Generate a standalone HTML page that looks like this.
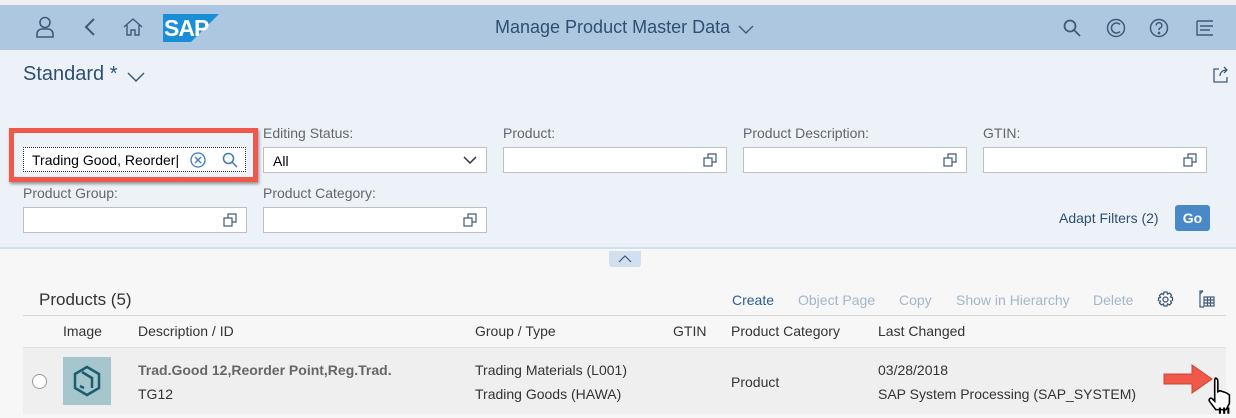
<!DOCTYPE html>
<html><head><meta charset="utf-8"><style>
*{box-sizing:border-box;margin:0;padding:0}
body{width:1236px;height:418px;overflow:hidden;background:#f7f7f7;font-family:"Liberation Sans",Arial,sans-serif;position:relative}
.a{position:absolute}
.top{left:0;top:0;width:1236px;height:5px;background:#efefef}
.hdr{left:0;top:5px;width:1236px;height:45px;background:#aec7e1}
.fb{left:0;top:50px;width:1236px;height:199px;background:#edf2f9;border-bottom:2px solid #d1dff0}
.lbl{font-size:14px;color:#666}
.inp{height:26px;background:#fff;border:1px solid #bfbfbf}
.vh{position:absolute;right:8px;top:5px}
.tb{font-size:14px;color:#a3b6cc}
.th{font-size:14px;color:#333}
</style></head><body>
<div class="a top"></div>
<div class="a hdr">
 <svg class="a" style="left:35px;top:11px" width="20" height="22" viewBox="0 0 20 22" fill="none" stroke="#3e5a78" stroke-width="1.6"><circle cx="10" cy="6.5" r="5"/><path d="M2 21v-3a5 5 0 0 1 5-5h6a5 5 0 0 1 5 5v3z"/></svg>
 <svg class="a" style="left:84px;top:12px" width="12" height="20" viewBox="0 0 12 20" fill="none" stroke="#3e5a78" stroke-width="2"><path d="M10 2L2 10l8 8"/></svg>
 <svg class="a" style="left:123px;top:13px" width="20" height="18" viewBox="0 0 20 18" fill="none" stroke="#3e5a78" stroke-width="1.4"><path d="M1 9L10 1l9 8M4 7v10h4v-5h4v5h4V7"/></svg>
 <svg class="a" style="left:163px;top:9px" width="56" height="28" viewBox="0 0 56 28"><path d="M0 0h56L28 28H0z" fill="#1a8fd8"/><text x="1" y="22" font-family="Liberation Sans" font-weight="bold" font-size="23" fill="#fff" letter-spacing="-1">SAP</text></svg>
 <div class="a" style="left:495px;top:12px;font-size:18px;color:#2e4e72">Manage Product Master Data</div>
 <svg class="a" style="left:738px;top:20px" width="16" height="10" viewBox="0 0 16 10" fill="none" stroke="#3e5a78" stroke-width="1.4"><path d="M1 1l7 7 7-7"/></svg>
 <svg class="a" style="left:1063px;top:14px" width="18" height="18" viewBox="0 0 18 18" fill="none" stroke="#3e5a78" stroke-width="1.8"><circle cx="7" cy="7" r="5.5"/><path d="M11 11l6 6"/></svg>
 <svg class="a" style="left:1106px;top:13px" width="20" height="20" viewBox="0 0 20 20" fill="none" stroke="#3e5a78" stroke-width="1.5"><circle cx="10" cy="10" r="8.5"/><path d="M14 6.5a5 5 0 1 0 0 7"/></svg>
 <svg class="a" style="left:1149px;top:13px" width="20" height="20" viewBox="0 0 20 20" fill="none" stroke="#3e5a78" stroke-width="1.5"><circle cx="10" cy="10" r="8.5"/><path d="M7.2 7.5a2.8 2.8 0 1 1 3.8 2.6c-.8.4-1 1-1 2"/><circle cx="10" cy="15" r=".6" fill="#3e5a78"/></svg>
 <svg class="a" style="left:1194px;top:15px" width="20" height="16" viewBox="0 0 20 16" fill="none" stroke="#3e5a78" stroke-width="1.4"><path d="M3 1h16M3 1v14h16M6 6h13M6 10h10"/></svg>
</div>
<div class="a fb">
 <div class="a" style="left:23px;top:13px;font-size:20px;color:#2e4e72">Standard *</div>
 <svg class="a" style="left:127px;top:22px" width="18" height="11" viewBox="0 0 18 11" fill="none" stroke="#3e5a78" stroke-width="1.5"><path d="M1 1l8 8 8-8"/></svg>
 <svg class="a" style="left:1213px;top:16px" width="17" height="17" viewBox="0 0 17 17" fill="none" stroke="#3e5a78" stroke-width="1.3"><path d="M6 3H1v13h13v-5M7 10c0-4 3-6 7-6M11 1l3 3-3 3"/></svg>
</div>
<div class="a" style="left:9px;top:128px;width:249px;height:54px;border:5px solid #f0594a;box-shadow:1px 2px 3px rgba(0,0,0,.4)"></div>
<div class="a inp" style="left:23px;top:147px;width:223px;height:25px;border:1px dotted #333"><span class="a" style="left:8px;top:4px;font-size:14px;color:#000">Trading Good, Reorder|</span>
 <svg class="a" style="left:166px;top:4px" width="16" height="16" viewBox="0 0 16 16" fill="none" stroke="#3b7ac0" stroke-width="1.3"><circle cx="8" cy="8" r="7"/><path d="M5 5l6 6M11 5l-6 6"/></svg>
 <svg class="a" style="left:198px;top:4px" width="16" height="16" viewBox="0 0 16 16" fill="none" stroke="#3b7ac0" stroke-width="1.5"><circle cx="6.5" cy="6.5" r="5"/><path d="M10 10l5 5"/></svg>
</div>
<div class="a lbl" style="left:263px;top:125px">Editing Status:</div>
<div class="a inp" style="left:263px;top:147px;width:224px"><span class="a" style="left:9px;top:5px;font-size:14px;color:#000">All</span>
 <svg class="a" style="left:199px;top:8px" width="14" height="9" viewBox="0 0 14 9" fill="none" stroke="#333" stroke-width="1.5"><path d="M1 1l6 6 6-6"/></svg></div>
<div class="a lbl" style="left:503px;top:125px">Product:</div>
<div class="a inp" style="left:503px;top:147px;width:224px"><svg class="vh" width="15" height="15" viewBox="0 0 15 15" fill="none" stroke="#3e5a78" stroke-width="1.2"><rect x="1" y="5" width="8" height="8"/><path d="M5 5V1h8v8H9"/></svg></div>
<div class="a lbl" style="left:743px;top:125px">Product Description:</div>
<div class="a inp" style="left:743px;top:147px;width:224px"><svg class="vh" width="15" height="15" viewBox="0 0 15 15" fill="none" stroke="#3e5a78" stroke-width="1.2"><rect x="1" y="5" width="8" height="8"/><path d="M5 5V1h8v8H9"/></svg></div>
<div class="a lbl" style="left:983px;top:125px">GTIN:</div>
<div class="a inp" style="left:983px;top:147px;width:224px"><svg class="vh" width="15" height="15" viewBox="0 0 15 15" fill="none" stroke="#3e5a78" stroke-width="1.2"><rect x="1" y="5" width="8" height="8"/><path d="M5 5V1h8v8H9"/></svg></div>
<div class="a lbl" style="left:23px;top:185px">Product Group:</div>
<div class="a inp" style="left:23px;top:207px;width:224px"><svg class="vh" width="15" height="15" viewBox="0 0 15 15" fill="none" stroke="#3e5a78" stroke-width="1.2"><rect x="1" y="5" width="8" height="8"/><path d="M5 5V1h8v8H9"/></svg></div>
<div class="a lbl" style="left:263px;top:185px">Product Category:</div>
<div class="a inp" style="left:263px;top:207px;width:224px"><svg class="vh" width="15" height="15" viewBox="0 0 15 15" fill="none" stroke="#3e5a78" stroke-width="1.2"><rect x="1" y="5" width="8" height="8"/><path d="M5 5V1h8v8H9"/></svg></div>
<div class="a" style="left:1059px;top:210px;font-size:14px;color:#2e4e72">Adapt Filters (2)</div>
<div class="a" style="left:1175px;top:205px;width:35px;height:26px;background:#4a89c8;border-radius:3px;color:#fff;font-size:14px;font-weight:bold;text-align:center;line-height:26px">Go</div>
<div class="a" style="left:609px;top:251px;width:32px;height:16px;background:#d1dff0;border-radius:0 0 3px 3px"><svg class="a" style="left:9px;top:4px" width="14" height="8" viewBox="0 0 14 8" fill="none" stroke="#3e5a78" stroke-width="1.2"><path d="M1 7l6-6 6 6"/></svg></div>
<div class="a" style="left:39px;top:290px;font-size:17px;color:#333">Products (5)</div>
<div class="a" style="left:732px;top:292px;font-size:14px;color:#2e5c92">Create</div>
<div class="a tb" style="left:798px;top:292px">Object Page</div>
<div class="a tb" style="left:899px;top:292px">Copy</div>
<div class="a tb" style="left:956px;top:292px">Show in Hierarchy</div>
<div class="a tb" style="left:1093px;top:292px">Delete</div>
<svg class="a" style="left:1157px;top:291px" width="17" height="17" viewBox="0 0 17 17" fill="none" stroke="#3e5a78" stroke-width="1.3"><circle cx="8.5" cy="8.5" r="2.5"/><path d="M7 1h3l.5 2 2-1 2 2-1 2 2 .5v3l-2 .5 1 2-2 2-2-1-.5 2H7l-.5-2-2 1-2-2 1-2-2-.5V7l2-.5-1-2 2-2 2 1z"/></svg>
<svg class="a" style="left:1197px;top:290px" width="18" height="18" viewBox="0 0 18 18" fill="none" stroke="#3e5a78" stroke-width="1.2"><path d="M6 1H3v16h4M6 1l-3 3"/><rect x="7" y="7" width="10" height="9"/><path d="M7 10h10M7 13h10M10.5 7v9M13.5 7v9"/></svg>
<div class="a" style="left:23px;top:315px;width:1203px;height:1px;background:#d6d6d6"></div>
<div class="a th" style="left:63px;top:323px">Image</div>
<div class="a th" style="left:138px;top:323px">Description / ID</div>
<div class="a th" style="left:475px;top:323px">Group / Type</div>
<div class="a th" style="left:673px;top:323px">GTIN</div>
<div class="a th" style="left:731px;top:323px">Product Category</div>
<div class="a th" style="left:878px;top:323px">Last Changed</div>
<div class="a" style="left:23px;top:347px;width:1203px;height:67px;background:#efefef;border-top:1px solid #e2e2e2"></div>
<div class="a" style="left:32px;top:374px;width:15px;height:15px;border-radius:50%;background:#fff;border:1px solid #999"></div>
<div class="a" style="left:63px;top:357px;width:48px;height:48px;background:#a4c6cc"><svg class="a" style="left:9px;top:8px" width="30" height="32" viewBox="0 0 30 32" fill="none" stroke="#1c5d6e" stroke-width="2.5"><path d="M15 2l12 7v14l-12 7-12-7V9z"/><path d="M10 7l10 6v10M8 21l4 2"/></svg></div>
<div class="a" style="left:138px;top:362px;font-size:14px;font-weight:bold;color:#666">Trad.Good 12,Reorder Point,Reg.Trad.</div>
<div class="a" style="left:138px;top:386px;font-size:14px;color:#333">TG12</div>
<div class="a th" style="left:475px;top:362px">Trading Materials (L001)</div>
<div class="a th" style="left:475px;top:386px">Trading Goods (HAWA)</div>
<div class="a th" style="left:731px;top:374px">Product</div>
<div class="a th" style="left:878px;top:362px">03/28/2018</div>
<div class="a th" style="left:878px;top:386px">SAP System Processing (SAP_SYSTEM)</div>
<svg class="a" style="left:1162px;top:362px" width="52" height="34" viewBox="0 0 52 34"><path d="M2 12h28V3l20 14-20 14v-9H2z" fill="#f0594a" stroke="#c43" stroke-width="1"/></svg>
<svg class="a" style="left:1206px;top:376px" width="30" height="42" viewBox="0 0 28 40"><path d="M8 2c2 0 3 1 3 3v10l2-1 3 1 3 1 3 2v8l-3 6H9L3 24c-1-2 1-4 3-2l2 2V5c0-2 0-3 2-3z" fill="#fff" stroke="#000" stroke-width="1.5"/><path d="M13 30v6M17 30v6M21 30v6" stroke="#000" stroke-width="2"/></svg>
</body></html>
